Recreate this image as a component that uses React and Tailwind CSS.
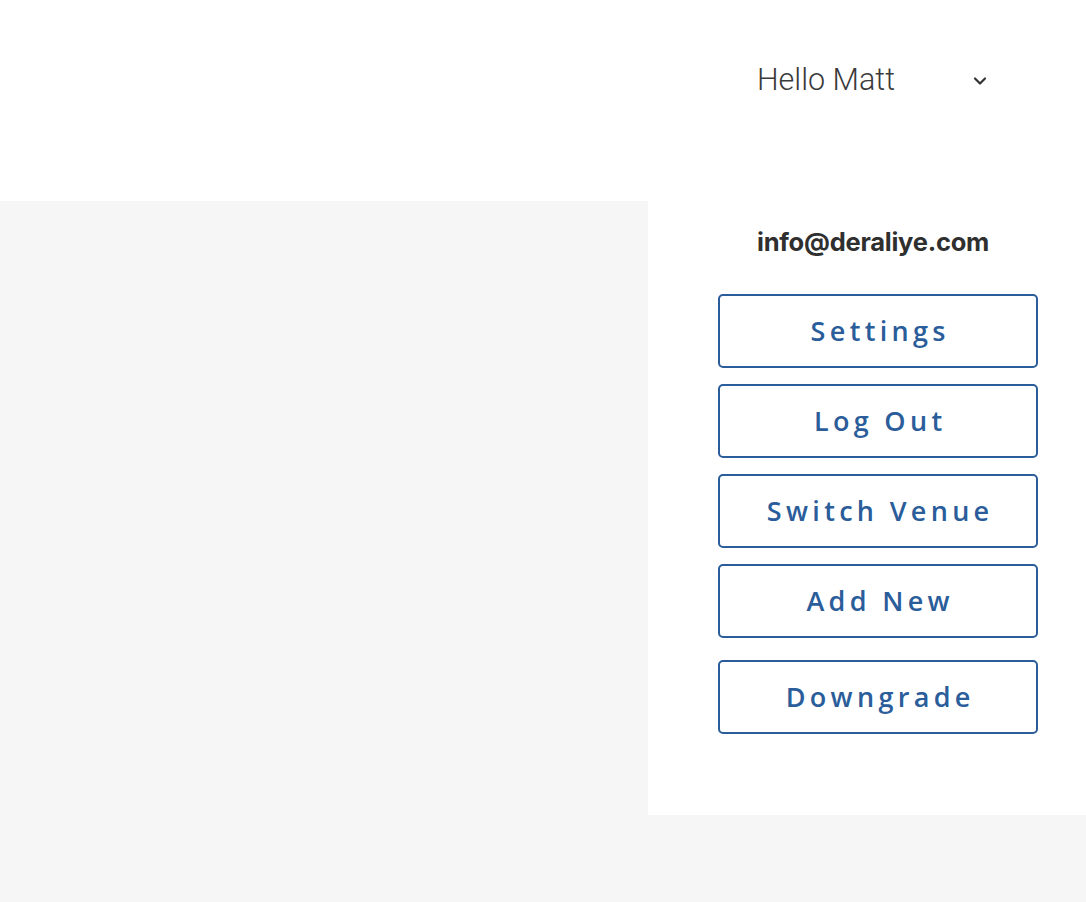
import React from "react";

function Btn({ children, className = "" }) {
  return (
    <button
      className={`w-[320px] h-[74px] border-2 border-[#2a5d9a] rounded-[5px] bg-white text-[#2a5d9a] text-[27px] font-semibold tracking-[0.16em] flex items-center justify-center ${className}`}
      style={{ fontFamily: '"Open Sans", sans-serif' }}
    >
      <span className="pl-[0.16em]">{children}</span>
    </button>
  );
}

export default function App() {
  return (
    <div className="w-[1086px] h-[902px] bg-[#f6f6f6] flex flex-col overflow-hidden">
      <header className="h-[201px] bg-white flex justify-end">
        <div className="w-[438px] flex items-start pt-[60px] pl-[109px]">
          <span
            className="text-[30.5px] text-[#3a3a3a] leading-[40px]"
            style={{ fontFamily: 'Roboto, sans-serif', fontWeight: 300 }}
          >
            Hello Matt
          </span>
          <svg className="ml-[78px] mt-[16px]" width="14" height="10" viewBox="0 0 14 10" fill="none">
            <path d="M2 2.5 L7 7.5 L12 2.5" stroke="#333" strokeWidth="2.2" strokeLinecap="round" strokeLinejoin="round" />
          </svg>
        </div>
      </header>
      <div className="flex justify-end">
        <div className="w-[438px] h-[614px] bg-white flex flex-col pl-[70px]">
          <div
            className="mt-[24px] ml-[39px] text-[25.5px] font-bold text-[#2f2f2f] tracking-[-0.01em] leading-[34px]"
            style={{ fontFamily: 'Inter, sans-serif' }}
          >
            info@deraliye.com
          </div>
          <div className="mt-[35px] flex flex-col gap-[16px]">
            <Btn>Settings</Btn>
            <Btn>Log Out</Btn>
            <Btn>Switch Venue</Btn>
            <Btn>Add New</Btn>
            <Btn className="mt-[6px]">Downgrade</Btn>
          </div>
        </div>
      </div>
    </div>
  );
}
